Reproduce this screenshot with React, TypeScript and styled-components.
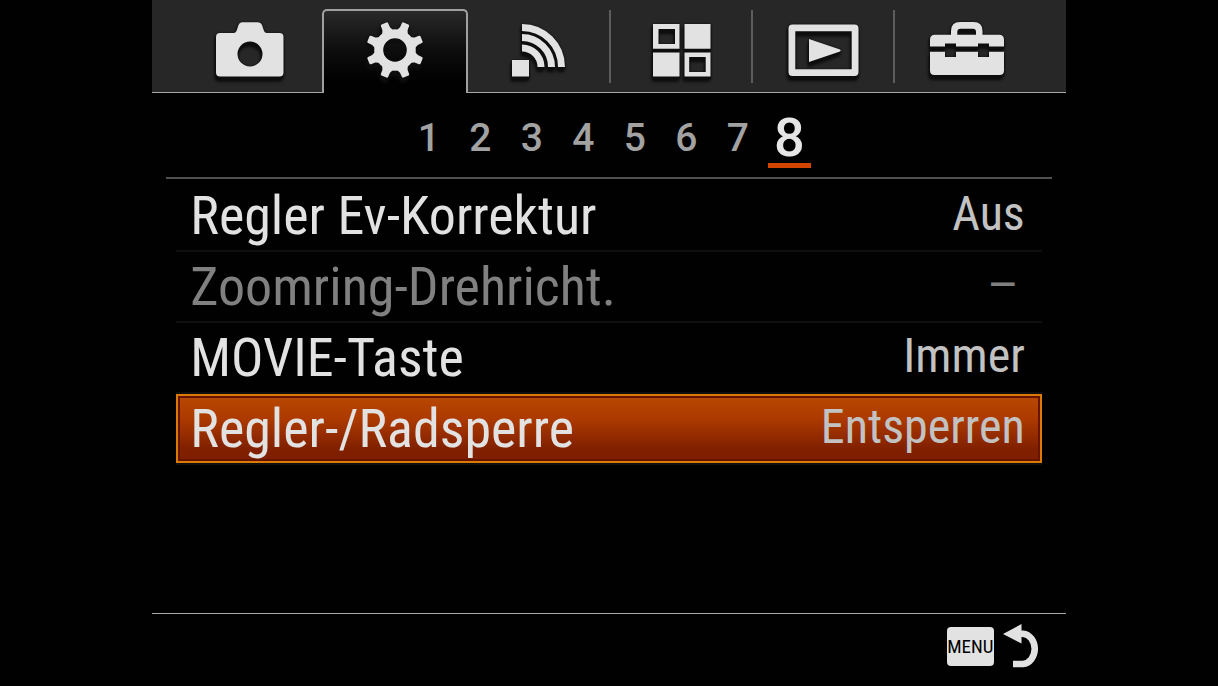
import React, { useState } from "react";
import styled, { createGlobalStyle, css } from "styled-components";

const narrow = `"Roboto Condensed", "Liberation Sans Narrow", "Arial Narrow", "Liberation Sans", sans-serif`;

const GlobalStyle = createGlobalStyle`
  * { box-sizing: border-box; }
  body { margin: 0; background: #010101; }
  button { margin: 0; padding: 0; border: 0; background: none; color: inherit; font: inherit; cursor: pointer; }
`;

const Screen = styled.main`
  width: 75%;
  min-height: 100vh;
  margin: 0 auto;
  display: flex;
  flex-direction: column;
  color: #e2e2e2;
  font-family: ${narrow};
`;

const TabBar = styled.nav`
  display: flex;
  height: 93px;
  padding: 0 28px 0 27px;
  background: #272727;
  box-shadow: inset 0 -1px #a8a8a8;
`;

const Tab = styled.button<{ $active: boolean; $divided: boolean }>`
  flex: 1;
  display: flex;
  align-items: flex-end;
  justify-content: center;
  padding-bottom: 9px;
  ${(p) =>
    p.$divided &&
    css`
      background: linear-gradient(#5c5c5c, #5c5c5c) right 10px / 2px 73px no-repeat;
    `}
  ${(p) =>
    p.$active &&
    css`
      margin-top: 9px;
      border: 2px solid #a0a0a0;
      border-bottom: 0;
      border-radius: 5px 5px 0 0;
      background: linear-gradient(#292929, #0c0c0c 50%, #010101 85%);
    `}
`;

const TabIcon = styled.svg`
  width: 80px;
  height: 64px;
  overflow: visible;
  filter: drop-shadow(0 0 1px #0c0c0c) drop-shadow(0 2px 0 #0e0e0e) drop-shadow(-1px 3px 1px #0e0e0e);
`;

const Pages = styled.nav`
  display: flex;
  width: 412px;
  height: 84px;
  margin: 0 auto;
  padding-bottom: 9px;
`;

const PageButton = styled.button<{ $active: boolean }>`
  flex: 1;
  margin: 0 4px;
  padding-top: 18px;
  border-bottom: 5px solid ${(p) => (p.$active ? "#d24400" : "transparent")};
  color: ${(p) => (p.$active ? "#e6e6e6" : "#a2a2a2")};
  font-family: Roboto, "Liberation Sans", sans-serif;
  font-size: ${(p) => (p.$active ? 54 : 39)}px;
  font-weight: 500;
  line-height: 54px;
`;

const Settings = styled.ul`
  flex: 1;
  list-style: none;
  margin: 0 14px;
  padding: 2px 10px 0;
  border-top: 2px solid #505050;
`;

const Item = styled.li`
  border-bottom: 2px solid #0f0f0f;
`;

const Row = styled.button<{ $selected: boolean; $muted: boolean }>`
  width: 100%;
  height: 69px;
  display: flex;
  align-items: center;
  justify-content: space-between;
  padding: 0 17px 0 14px;
  color: ${(p) => (p.$muted ? "#808080" : "#e2e2e2")};
  ${(p) =>
    p.$selected &&
    css`
      background: linear-gradient(#b84a00, #ad3a00 35%, #802000 80%, #7c1e00);
      box-shadow: inset 0 0 0 2px #dc7a08, inset 0 0 0 4px #641400;
    `}
`;

const Label = styled.span`
  font-size: 54px;
  line-height: 69px;
`;

const Value = styled.span<{ $muted: boolean }>`
  padding-bottom: 4px;
  color: #c2c2c2;
  font-size: 48px;
  line-height: 60px;
  ${(p) =>
    p.$muted &&
    css`
      padding-right: 6px;
      color: #808080;
      font-family: Roboto, "Liberation Sans", sans-serif;
    `}
`;

const Footer = styled.footer`
  height: 73px;
  display: flex;
  justify-content: flex-end;
  align-items: center;
  padding: 0 26px 8px 0;
  border-top: 1px solid #a8a8a8;
`;

const BackButton = styled.button`
  display: flex;
  align-items: center;
  gap: 9px;
`;

const MenuKey = styled.span`
  width: 47px;
  height: 39px;
  border-radius: 4px;
  background: #e2e2e2;
  color: #000;
  font-size: 19px;
  line-height: 39px;
  text-align: center;
`;

const BackArrow = styled.svg`
  width: 37px;
  height: 44px;
`;

const light = "#e2e2e2";

const icons: Record<string, React.ReactNode> = {
  camera: (
    <path
      fill={light}
      fillRule="evenodd"
      d="M10 13H23.5Q26 13 27 9.500L28.500 5Q29.500 2.300 32 2.300H48Q51 2.300 52 5L53.500 9.500Q54.500 13 57 13H69.500Q73.500 13 73.500 17V52.500Q73.500 56.500 69.500 56.500H10Q6 56.500 6 52.500V17Q6 13 10 13ZM40 21.500A12.500 12.500 0 1 0 40 46.500A12.500 12.500 0 1 0 40 21.500Z"
    />
  ),
  gear: (
    <g transform="translate(40 30)" fill={light}>
      <circle r="16.300" fill="none" stroke={light} strokeWidth="9" />
      {[22.5, 67.5, 112.5, 157.5, 202.5, 247.5, 292.5, 337.5].map((a) => (
        <path key={a} transform={`rotate(${a})`} d="M-6 -19L-4.100 -23L-3.900 -27.500Q-3.800 -28.800 -2.600 -28.800H2.600Q3.800 -28.800 3.900 -27.500L4.100 -23L6 -19Z" />
      ))}
    </g>
  ),
  wireless: (
    <g>
      <rect x="13" y="40" width="17" height="16.500" fill={light} />
      <g fill="none" stroke={light} strokeWidth="7">
        <path d="M23 7.500A39.500 39.500 0 0 1 62.500 47" />
        <path d="M23 17.500A29.500 29.500 0 0 1 52.500 47" />
        <path d="M23 28A19 19 0 0 1 42 47" />
      </g>
    </g>
  ),
  apps: (
    <path
      fill={light}
      fillRule="evenodd"
      d="M11 4H37.500V28.700H11ZM16.500 9V24H33V9ZM42.500 4H68.500V28.700H42.500ZM11 32.500H37.500V56.500H11ZM42.500 32.500H68.500V56.500H42.500ZM47.200 37V52H63.700V37Z"
    />
  ),
  playback: (
    <path
      fill={light}
      fillRule="evenodd"
      d="M8.500 4.500H70.500Q74.500 4.500 74.500 8.500V52Q74.500 56 70.500 56H8.500Q4.500 56 4.500 52V8.500Q4.500 4.500 8.500 4.500ZM11.300 11.300V49.300H67.700V11.300ZM25 19L56 29.500Q57.500 30.500 56 31.500L25 42Z"
    />
  ),
  toolbox: (
    <path
      fill={light}
      fillRule="evenodd"
      d="M24 14.700V11Q24 2 33 2H46.500Q55.500 2 55.500 11V14.700H72Q77 14.700 77 19.700V26.500H62V23.500H51V26.500H29V23.500H18V26.500H3V19.700Q3 14.700 8 14.700ZM30.300 14.700H49V12Q49 8.700 45.700 8.700H33.600Q30.300 8.700 30.300 12ZM3 31.700H18V37H29V31.700H51V37H62V31.700H77V50.500Q77 55 72.500 55H7.500Q3 55 3 50.500Z"
    />
  ),
};

const tabs = [
  { icon: "camera", name: "Kamera" },
  { icon: "gear", name: "Benutzereinstellungen" },
  { icon: "wireless", name: "Drahtlos" },
  { icon: "apps", name: "Applikationen" },
  { icon: "playback", name: "Wiedergabe" },
  { icon: "toolbox", name: "Setup" },
];

const settings = [
  { label: "Regler Ev-Korrektur", value: "Aus" },
  { label: "Zoomring-Drehricht.", value: "–", muted: true },
  { label: "MOVIE-Taste", value: "Immer" },
  { label: "Regler-/Radsperre", value: "Entsperren" },
];

export default function App() {
  const [tab, setTab] = useState(1);
  const [page, setPage] = useState(8);
  const [selected, setSelected] = useState(3);

  return (
    <>
      <GlobalStyle />
      <Screen>
        <TabBar>
          {tabs.map((t, i) => (
            <Tab
              key={t.icon}
              aria-label={t.name}
              $active={i === tab}
              $divided={i !== tab && i + 1 !== tab && i < tabs.length - 1}
              onClick={() => setTab(i)}
            >
              <TabIcon viewBox="0 0 80 64" aria-hidden>
                {icons[t.icon]}
              </TabIcon>
            </Tab>
          ))}
        </TabBar>
        <Pages>
          {[1, 2, 3, 4, 5, 6, 7, 8].map((n) => (
            <PageButton key={n} $active={n === page} onClick={() => setPage(n)}>
              {n}
            </PageButton>
          ))}
        </Pages>
        <Settings>
          {settings.map((s, i) => (
            <Item key={s.label}>
              <Row $selected={i === selected} $muted={!!s.muted} onClick={() => setSelected(i)}>
                <Label>{s.label}</Label>
                <Value $muted={!!s.muted}>{s.value}</Value>
              </Row>
            </Item>
          ))}
        </Settings>
        <Footer>
          <BackButton>
            <MenuKey>MENU</MenuKey>
            <BackArrow viewBox="0 0 37 44" aria-hidden>
              <path d="M0 10L18.500 0V19.500Z" fill={light} />
              <path d="M17 9.700H20A12.800 15.200 0 0 1 20 40H10" fill="none" stroke={light} strokeWidth="6.600" />
            </BackArrow>
          </BackButton>
        </Footer>
      </Screen>
    </>
  );
}
